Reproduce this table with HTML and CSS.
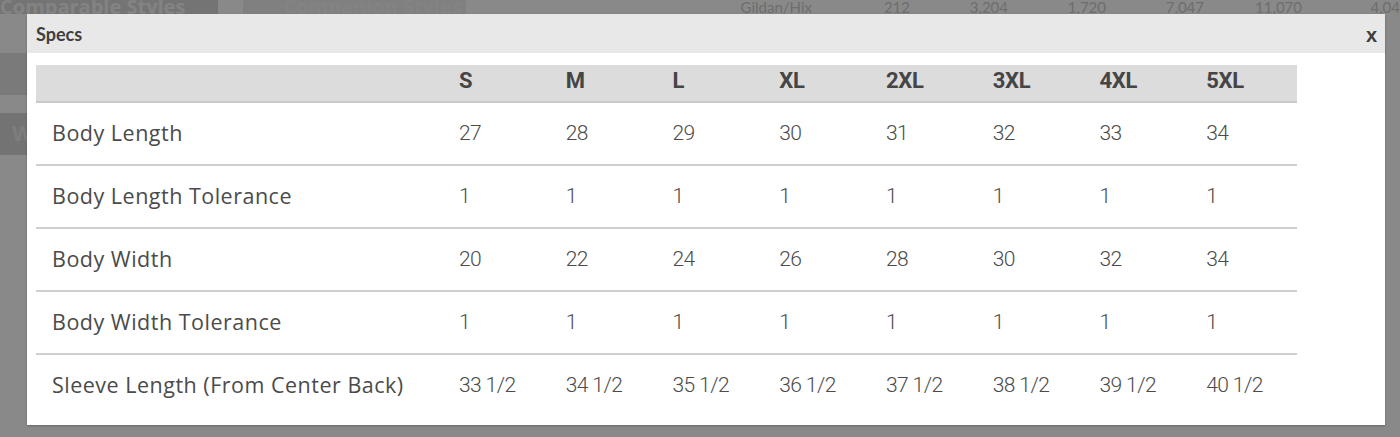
FILE: index.html
```html
<!DOCTYPE html>
<html lang="en">
<head>
  <meta charset="UTF-8">
  <title>Specs</title>
  <link rel="stylesheet" href="styles.css">
</head>
<body>
  <!-- page underneath the dialog -->
  <div class="page">
    <div class="tabs">
      <div class="tab tab-active">Comparable Styles</div>
      <div class="tab">Companion Styles</div>
      <div class="stats">
        <span class="stat-name">Gildan/Hix</span>
        <span>212</span><span>3,204</span><span>1,720</span><span>7,047</span><span>11,070</span><span>4,04</span>
      </div>
    </div>
    <div class="side-block"></div>
    <div class="side-block side-dark">W</div>
  </div>

  <div class="overlay"></div>

  <!-- specs dialog -->
  <div class="modal">
    <div class="modal-head">
      <span class="modal-title">Specs</span>
      <span class="modal-close">x</span>
    </div>
    <div class="modal-body">
      <table class="specs">
        <thead>
          <tr>
            <th class="label-col"></th>
            <th>S</th><th>M</th><th>L</th><th>XL</th><th>2XL</th><th>3XL</th><th>4XL</th><th>5XL</th>
          </tr>
        </thead>
        <tbody>
          <tr>
            <td>Body Length</td>
            <td>27</td><td>28</td><td>29</td><td>30</td><td>31</td><td>32</td><td>33</td><td>34</td>
          </tr>
          <tr>
            <td>Body Length Tolerance</td>
            <td>1</td><td>1</td><td>1</td><td>1</td><td>1</td><td>1</td><td>1</td><td>1</td>
          </tr>
          <tr>
            <td>Body Width</td>
            <td>20</td><td>22</td><td>24</td><td>26</td><td>28</td><td>30</td><td>32</td><td>34</td>
          </tr>
          <tr>
            <td>Body Width Tolerance</td>
            <td>1</td><td>1</td><td>1</td><td>1</td><td>1</td><td>1</td><td>1</td><td>1</td>
          </tr>
          <tr>
            <td>Sleeve Length (From Center Back)</td>
            <td>33 1/2</td><td>34 1/2</td><td>35 1/2</td><td>36 1/2</td><td>37 1/2</td><td>38 1/2</td><td>39 1/2</td><td>40 1/2</td>
          </tr>
        </tbody>
      </table>
    </div>
  </div>
</body>
</html>
```

FILE: styles.css
```css
html, body {
  margin: 0;
  height: 100%;
  overflow: hidden;
}
body {
  background: #f4f4f4;
  color: #4a4a4a;
  font-family: Lato, "Open Sans", sans-serif;
  position: relative;
}
/* page under the dialog */
.page {
  display: flex;
  flex-direction: column;
}
.tabs {
  display: flex;
  align-items: flex-start;
  height: 14px;
  overflow: hidden;
}
.tab {
  width: 240px;
  height: 14px;
  margin-right: 25px;
  background: #e4e4e4;
  color: #eaeaea;
  font: bold 20px/14px "Open Sans", sans-serif;
  padding-left: 40px;
  box-sizing: border-box;
  overflow: hidden;
}
.tab-active {
  background: #cfcfcf;
  padding-left: 0;
}
.stats {
  display: flex;
  gap: 38px;
  margin-left: 250px;
  color: #c4c4c4;
  font: 15px/14px Lato, sans-serif;
}
.stats span:not(.stat-name) {
  width: 60px;
  text-align: right;
}
.side-block {
  width: 27px;
  height: 42px;
  margin-top: 39px;
  background: #dadada;
}
.side-dark {
  margin-top: 18px;
  background: #cdcdcd;
  color: #e0e0e0;
  font: bold 22px/42px sans-serif;
  text-indent: 12px;
  overflow: hidden;
}
/* dark backdrop */
.overlay {
  position: absolute;
  inset: 0;
  background: rgba(0, 0, 0, 0.44);
}
/* dialog */
.modal {
  position: absolute;
  top: 14px;
  left: 27px;
  width: 1358px;
  height: 411px;
  background: #fff;
  box-shadow: 0 1px 2px rgba(0, 0, 0, 0.25);
}
.modal-head {
  height: 39px;
  background: #e8e8e8;
  display: flex;
  align-items: center;
  justify-content: space-between;
  padding: 0 8px 0 9px;
}
.modal-title {
  font: bold 18px/1 Lato, sans-serif;
  color: #3f3f3f;
}
.modal-close {
  font: bold 20px/1 "Liberation Sans", sans-serif;
  color: #3f3f3f;
  padding-top: 2px;
}
.modal-body {
  padding: 12px 88px 0 9px;
}
table.specs {
  width: 100%;
  border-collapse: collapse;
  table-layout: fixed;
}
table.specs th {
  background: #dcdcdc;
  border-bottom: 2px solid #c9c9c9;
  text-align: left;
  padding: 0 16px 5px;
  line-height: 31px;
  font-family: Roboto, sans-serif;
  font-size: 22px;
  font-weight: bold;
  color: #454545;
  letter-spacing: -0.3px;
}
table.specs th.label-col {
  width: 375px;
}
table.specs td {
  padding: 15px 16px 16px;
  line-height: 30px;
  border-bottom: 2px solid #cfcfcf;
  font-family: "Open Sans", sans-serif;
  font-size: 21.5px;
  letter-spacing: 0.5px;
  color: #4b4b4b;
  white-space: nowrap;
}
table.specs tbody tr:last-child td {
  border-bottom: none;
}
table.specs td:not(:first-child) {
  font-family: Roboto, sans-serif;
  font-weight: 300;
  font-size: 21px;
  letter-spacing: -0.6px;
}
```
